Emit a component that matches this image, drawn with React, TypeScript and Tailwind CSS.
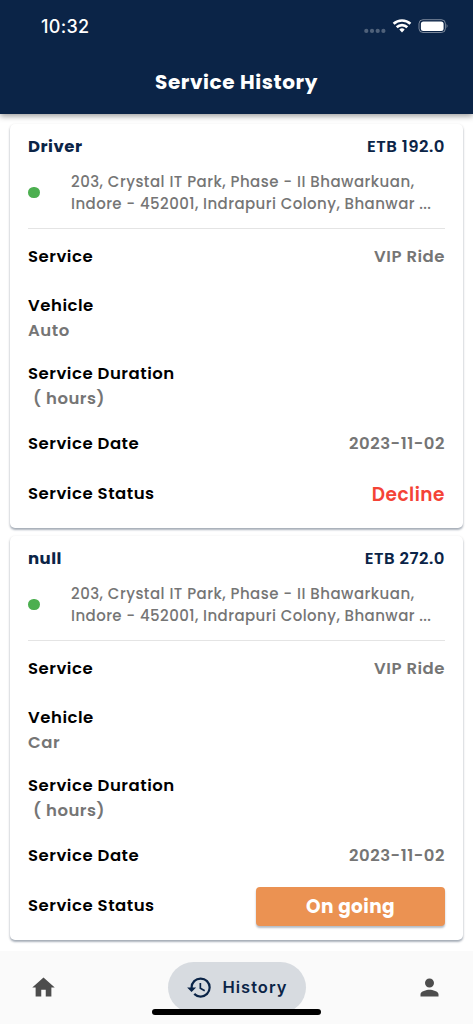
import { MdHistory, MdHome, MdPerson } from 'react-icons/md';

interface ServiceItem {
  name: string;
  price: string;
  vehicle: string;
  status: 'decline' | 'ongoing';
}

const services: ServiceItem[] = [
  { name: 'Driver', price: 'ETB 192.0', vehicle: 'Auto', status: 'decline' },
  { name: 'null', price: 'ETB 272.0', vehicle: 'Car', status: 'ongoing' },
];

function StatusBar() {
  return (
    <div className="flex h-[53px] items-center justify-between pr-[26px] pl-[41px]">
      <span className="font-['Inter',sans-serif] text-[18px] leading-6 font-medium tracking-[0.3px]">10:32</span>
      <svg className="-mt-[2px] h-4 w-[86px] -mr-px" viewBox="0 0 86 16" fill="white">
        <g opacity="0.28">
          <circle cx="4.3" cy="12.9" r="2.1" />
          <circle cx="10" cy="12.9" r="2.1" />
          <circle cx="15.7" cy="12.9" r="2.1" />
          <circle cx="21.4" cy="12.9" r="2.1" />
        </g>
        <g fill="none" stroke="white" strokeWidth="2.6">
          <path d="M31.6 5.8a12.2 12.2 0 0 1 16.8 0" />
          <path d="M34.7 9.3a7.6 7.6 0 0 1 10.6 0" />
        </g>
        <path d="M37.3 11.5a4 4 0 0 1 5.4 0L40 14.5z" />
        <rect x="57" y="1.7" width="26.4" height="12.8" rx="4" fill="none" stroke="white" strokeOpacity="0.45" />
        <rect x="58.9" y="3.4" width="22.7" height="9.5" rx="2.5" />
        <path d="M84.6 6v4.2q1.8-2.1 0-4.2" opacity="0.5" />
      </svg>
    </div>
  );
}

function ServiceCard({ item }: { item: ServiceItem }) {
  return (
    <div className="h-[404px] rounded-[5px] bg-white px-[18px] pt-[11px] shadow-[0_2px_2px_rgba(11,36,71,0.28),0_1px_3px_rgba(0,0,0,0.16)]">
      <div className="flex h-6 items-center justify-between text-[#0b2447]">
        <span className="text-[16.5px] font-bold tracking-[0.5px]">{item.name}</span>
        <span className="text-[16.5px] tracking-[0.5px]">{item.price}</span>
      </div>

      <div className="mt-[12px] flex h-[43px] items-center">
        <span className="mr-[31.5px] h-[11.5px] w-[11.5px] shrink-0 rounded-full bg-[#4caf50]" />
        <p className="text-[15px] leading-[21.5px] font-medium whitespace-nowrap text-[#757575]">
          <span className="block tracking-[0.48px]">203, Crystal IT Park, Phase - II Bhawarkuan,</span>
          <span className="block tracking-[0.43px]">Indore - 452001, Indrapuri Colony, Bhanwar ...</span>
        </p>
      </div>
      <hr className="mt-[14px] border-[#e4e4e4]" />

      <div className="mt-[16px] flex h-6 items-center justify-between">
        <span>Service</span>
        <span className="text-[#757575]">VIP Ride</span>
      </div>
      <div className="mt-[25px] flex flex-col gap-px leading-6">
        <span>Vehicle</span>
        <span className="text-[#757575]">{item.vehicle}</span>
      </div>
      <div className="mt-[19px] flex flex-col gap-px leading-6">
        <span>Service Duration</span>
        <span className="pl-[5px] text-[#757575]">( hours)</span>
      </div>
      <div className="mt-[21px] flex h-6 items-center justify-between">
        <span>Service Date</span>
        <span className="text-[#757575]">2023-11-02</span>
      </div>
      <div className="mt-[18px] flex h-10 items-center justify-between">
        <span>Service Status</span>
        {item.status === 'decline' ? (
          <span className="pt-px text-[18.5px] tracking-[0.5px] text-[#f44336]">Decline</span>
        ) : (
          <button className="h-[39px] w-[189px] rounded-[4px] bg-[#eb9252] pt-0.5 text-[18.5px] font-bold tracking-[0.4px] text-white shadow-[0_2px_2px_rgba(11,36,71,0.3)]">
            On going
          </button>
        )}
      </div>
    </div>
  );
}

function BottomNav() {
  return (
    <nav className="relative flex h-[73px] justify-between bg-[#fafafa] px-[30px] pt-[11px]">
      <MdHome className="mt-[12px] h-[27px] w-[27px] text-[#4d4d4d]" />
      <div className="flex h-[51px] w-[138px] items-center gap-[10px] rounded-full bg-[#d7dbe0] pl-[18px] text-[#0b2447]">
        <MdHistory className="h-[27px] w-[27px]" />
        <span className="font-['Inter',sans-serif] text-[16.5px] font-semibold tracking-[1px]">History</span>
      </div>
      <MdPerson className="mt-3 h-[27px] w-[27px] text-[#4d4d4d]" />
      <div className="absolute bottom-[9px] left-[152px] h-[6px] w-[169px] rounded-full bg-black" />
    </nav>
  );
}

export default function App() {
  return (
    <div className="flex h-[1024px] w-[473px] flex-col overflow-hidden bg-white font-['Poppins','Inter',sans-serif] text-[16.5px] font-semibold tracking-[0.52px] text-black">
      <header className="relative h-[114px] shrink-0 bg-[#0b2447] text-white shadow-[0_2px_6px_rgba(0,0,0,0.4)]">
        <StatusBar />
        <h1 className="mt-[14px] text-center text-[20px] leading-[30px] font-bold tracking-[0.6px]">Service History</h1>
      </header>
      <main className="flex h-[837px] shrink-0 flex-col gap-2 px-[10px] pt-[10px]">
        {services.map((item) => (
          <ServiceCard key={item.name} item={item} />
        ))}
      </main>
      <BottomNav />
    </div>
  );
}
